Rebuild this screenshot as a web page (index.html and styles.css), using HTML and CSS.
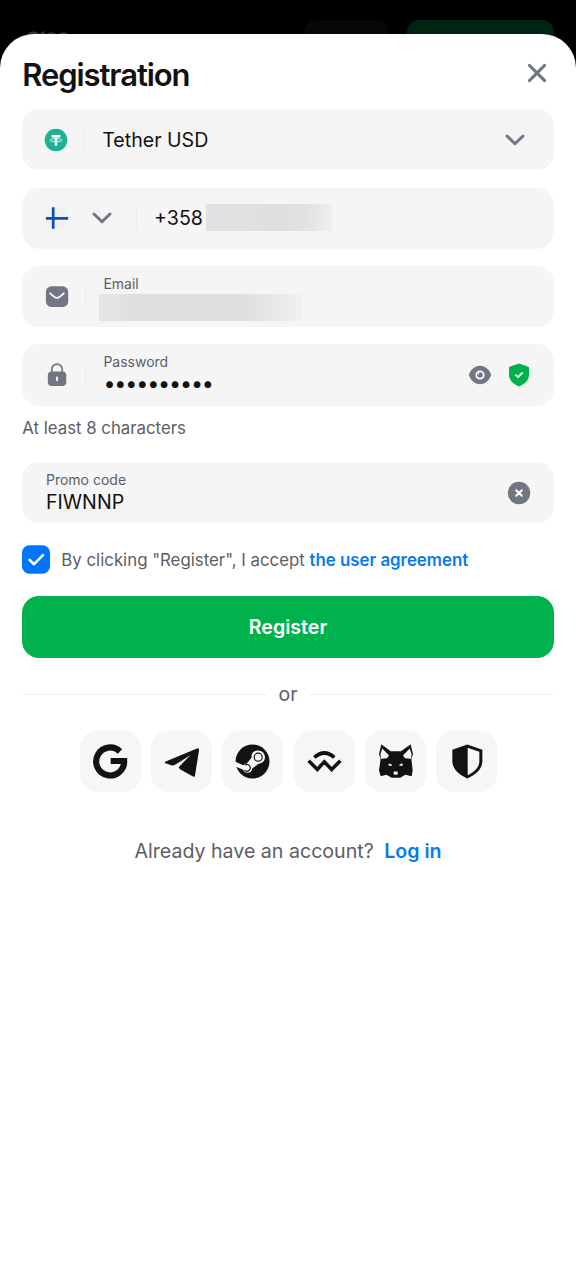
FILE: index.html
```html
<!DOCTYPE html>
<html lang="en">
<head>
<meta charset="utf-8">
<title>Registration</title>
<link rel="stylesheet" href="styles.css">
</head>
<body>
<header class="topbar">
  <svg class="topbar-logo" width="46" height="16" viewBox="0 0 46 16" fill="none" stroke="#343434" stroke-width="4"><path d="M2 9a6 6 0 0 1 11 0M16 4l3 6M30 9a5 5 0 0 0-9 0M33 9a5 5 0 0 1 9 0"/></svg>
  <span class="topbar-login"></span>
  <span class="topbar-register"></span>
</header>
<main class="sheet">
  <div class="heading">
    <h1 class="title">Registration</h1>
    <svg class="close" width="20" height="20" viewBox="0 0 20 20"><path class="line" d="M2.4 2.4 17.600 17.600M17.600 2.400 2.400 17.600"/></svg>
  </div>

  <div class="field currency">
    <svg width="24" height="24" viewBox="0 0 24 24"><circle cx="12" cy="12" r="11.3" fill="#1fb193"/><path d="M7.6 7h8.8v2.500h-3.100v8.200h-2.600V9.500H7.600z" fill="#fff"/><ellipse cx="12" cy="12.200" rx="6.200" ry="1.500" fill="none" stroke="#fff" stroke-width=".8"/></svg>
    <i class="divider"></i>
    <span class="value">Tether USD</span>
    <svg class="chevron" width="20" height="12" viewBox="0 0 20 12"><path class="line" d="M2 2l8 7.800L18 2"/></svg>
  </div>

  <div class="field phone">
    <svg width="24" height="24" viewBox="0 0 24 24"><circle cx="12" cy="12" r="11.200" fill="#f0f0f1"/><path d="M8.200 1.300v21.400M.9 12.300h22.200" stroke="#0c50ab" stroke-width="2.700"/></svg>
    <svg class="code-chevron" width="20" height="12" viewBox="0 0 20 12"><path class="line" d="M2 2l8 7.800L18 2"/></svg>
    <i class="divider"></i>
    <span class="value">+358</span>
    <span class="masked masked-phone"></span>
  </div>

  <div class="field email">
    <svg width="24" height="24" viewBox="0 0 24 24"><rect x=".9" y="1.300" width="22.300" height="20.600" rx="5.500" fill="#717684"/><path d="M5.200 8.400c2.600 2.500 4.800 4.500 6.800 4.500s4.200-2 6.800-4.500" fill="none" stroke="#fff" stroke-width="1.800" stroke-linecap="round"/></svg>
    <i class="divider"></i>
    <div class="stack">
      <span class="label">Email</span>
      <span class="masked masked-email"></span>
    </div>
  </div>

  <div class="field password">
    <svg width="24" height="24" viewBox="0 0 24 24"><path d="M6.800 11V6.300a5.200 5.200 0 0 1 10.400 0V11" fill="none" stroke="#717684" stroke-width="1.700"/><rect x="2.800" y="8.600" width="18.500" height="14.500" rx="4" fill="#717684"/><path d="M12 14.400v2.800" stroke="#fff" stroke-width="1.900" stroke-linecap="round"/></svg>
    <i class="divider"></i>
    <div class="stack">
      <span class="label">Password</span>
      <span class="dots">••••••••••</span>
    </div>
    <svg class="eye" width="24" height="24" viewBox="0 0 24 24"><path d="M.8 12C2.500 6.900 6.800 2.800 12 2.800S21.500 6.900 23.200 12C21.500 17.100 17.200 21.200 12 21.200S2.500 17.100.8 12z" fill="#717684"/><circle cx="12" cy="12" r="3.700" fill="none" stroke="#fff" stroke-width="1.800"/><circle cx="10.600" cy="10.600" r=".8" fill="#fff"/></svg>
    <svg class="safe" width="24" height="24" viewBox="0 0 24 24"><path d="M12 .6 20.700 3.400q1.300.4 1.300 1.700V12c0 5.500-4.600 9.200-10 11.400C6.600 21.200 2 17.500 2 12V5.100Q2 3.800 3.300 3.400z" fill="#00b24c"/><path d="m8.300 11.600 2.700 2.500 4.700-4.600" fill="none" stroke="#fff" stroke-width="1.800"/></svg>
  </div>
  <p class="hint">At least 8 characters</p>

  <div class="field promo">
    <div class="stack">
      <span class="label">Promo code</span>
      <span class="value">FIWNNP</span>
    </div>
    <svg class="clear" width="24" height="24" viewBox="0 0 24 24"><circle cx="12" cy="12" r="11.200" fill="#717684"/><path d="m9.200 9.200 5.600 5.600m0-5.600-5.600 5.600" stroke="#fff" stroke-width="2" stroke-linecap="round"/></svg>
  </div>

  <div class="agree">
    <svg width="28" height="29" viewBox="0 0 28 29"><rect y=".3" width="28" height="28.400" rx="7.500" fill="#0075ff"/><path d="m7.500 14.800 4.500 4.400 9-9" fill="none" stroke="#fff" stroke-width="2.600" stroke-linecap="round" stroke-linejoin="round"/></svg>
    <span class="agree-text">By clicking "Register", I accept <a class="link">the user agreement</a></span>
  </div>

  <button class="submit">Register</button>

  <div class="or"><span class="or-text">or</span></div>

  <div class="socials">
    <span class="social"><svg viewBox="15 25.500 183 183"><path d="M135 87A42 42 0 1 0 147.500 115.500H107" fill="none" stroke="#121212" stroke-width="18.500"/></svg></span>
    <span class="social"><svg viewBox="228 25.500 183 183"><path d="M272 117 366 78q7-2 6 6l-12 75q-1 6-6 3l-39-22q-6-4-1-9l32-33-46 29q-5 3-11 1l-18-6q-4-2 1-5z" fill="#121212"/></svg></span>
    <span class="social"><svg viewBox="19.500 25.500 183 183"><circle cx="111" cy="117" r="51" fill="#121212"/><path d="M58 117 83 128Q88 123 94 123L108 106Q107 84 128 84A20 20 0 0 1 129 124L110 138A14 14 0 0 1 83 142L58 131z" fill="#f6f6f6"/><circle cx="128" cy="104" r="12" fill="none" stroke="#121212" stroke-width="3.600"/><path d="M88 128A10 10 0 1 1 87 143" fill="none" stroke="#121212" stroke-width="3.400"/></svg></span>
    <span class="social"><svg viewBox="234 25.500 183 183" fill="none" stroke="#121212" stroke-width="10.800"><path d="M295 105q30-27 60 0M278 115 304 141 325 118 347 141 373 115"/></svg></span>
    <span class="social"><svg viewBox="15 25.500 183 183"><path d="M64 65 92 86h31l29-21 7 30-5 14 4 34-3 18-19-4-15 9H95l-16-9-17 4-5-18 5-34-5-14z" fill="#121212"/><path d="m67 78 20 21-6 8-18 2-2-14zM149 78l-20 21 6 8 18 2 2-14z" fill="#f6f6f6"/><path d="m85 125 4-2 7 4v3h-9zM129 125l-4-2-7 4v3h9zM102 147h10l2 6-3 4h-8l-3-4z" fill="#f6f6f6"/></svg></span>
    <span class="social"><svg viewBox="228 25.500 183 183"><path d="M322 66 367 82v34c0 25-21 40-45 52-24-12-45-27-45-52V82z" fill="#121212"/><path d="m323 76 35 12v28c0 20-16 32-35 42z" fill="#f6f6f6"/></svg></span>
  </div>

  <p class="login">Already have an account? <a class="link login-link">Log in</a></p>
</main>
</body>
</html>
```
FILE: styles.css
```css
* { box-sizing: border-box; }
body {
  margin: 0;
  height: 1280px;
  overflow: hidden;
  background: #000;
  color: #121212;
  font-family: Inter, "Liberation Sans", sans-serif;
}
svg { display: block; flex: none; }
.line {
  fill: none;
  stroke: #717684;
  stroke-width: 3;
  stroke-linecap: round;
  stroke-linejoin: round;
}
.topbar {
  display: flex;
  height: 33.5px;
  padding: 20px 22px 0 26px;
  overflow: visible;
}
.topbar-logo { margin: 7.500px auto 0 0; }
.topbar-login, .topbar-register { height: 44px; border-radius: 12px; }
.topbar-login { width: 85px; background: #070707; }
.topbar-register { width: 147px; margin-left: 18px; background: #002410; }
.sheet {
  position: relative;
  height: 1250px;
  padding: 0 22.300px;
  border-radius: 34px 34px 0 0;
  background: #fff;
}
.heading {
  display: flex;
  justify-content: space-between;
  height: 75.700px;
  padding: 22px 6.700px 0 0;
}
.title {
  margin: 0;
  font-size: 31px;
  line-height: 38px;
  font-weight: 600;
  letter-spacing: -1.100px;
}
.close { margin-top: 7px; }
.field {
  display: flex;
  align-items: center;
  height: 61.200px;
  margin-bottom: 17.200px;
  padding-left: 22.700px;
  border-radius: 17px;
  background: #f5f5f5;
}
.currency { padding: 0 28.700px 0 21.500px; }
.divider { width: 1.400px; height: 23px; margin-left: 16px; background: #ebebec; }
.value { font-size: 19.600px; line-height: 24px; }
.currency .value { margin-left: 17px; }
.chevron { margin-left: auto; }
.code-chevron { margin-left: 23px; }
.phone .divider { margin-left: 23.700px; }
.phone .value { margin-left: 17px; }
.masked { height: 26.500px; background: linear-gradient(90deg, #e6e6e6, #dedede 20%, #dfdfdf 70%, #f1f1f1); }
.masked-phone { width: 127px; margin: -1px 0 0 3.500px; background: linear-gradient(90deg, #e2e2e2, #dfdfdf 60%, #e2e2e2 80%, #f0f0f0); }
.masked-email { width: 203px; margin: 2px 0 0 -4px; }
.stack { display: flex; flex-direction: column; height: 61px; padding-top: 9px; margin-left: 17px; }
.label { font-size: 14px; line-height: 17px; color: #5b5e66; }
.dots { margin-top: 1px; font-size: 21.500px; line-height: 24px; letter-spacing: -1.150px; }
.email, .password { padding-right: 22.500px; }
.password { margin-bottom: 12px; }
.eye { margin-left: auto; }
.safe { margin-left: 15px; }
.hint { margin: 0 0 24px; font-size: 16.800px; line-height: 20.600px; color: #5b5e66; }
.promo { padding: 0 22.700px 0 23.700px; margin-bottom: 22px; }
.promo .stack { margin: 0; }
.promo .value { margin-top: 2px; }
.clear { margin-left: auto; }
.agree { display: flex; align-items: center; gap: 11px; height: 29px; margin-bottom: 22px; }
.agree-text { font-size: 16.830px; color: #5b5e66; white-space: nowrap; }
.link { color: #087bea; font-weight: 600; }
.submit {
  display: block;
  width: 100%;
  height: 61.500px;
  border: 0;
  border-radius: 17px;
  background: #00b24c;
  color: #fff;
  font: 600 19.600px/24px Inter, sans-serif;
}
.or { display: flex; align-items: center; gap: 11.500px; height: 73px; }
.or::before, .or::after { content: ""; flex: 1; height: 1.400px; background: #f0f0f1; }
.or-text { font-size: 19.500px; color: #5b5e66; }
.socials { display: flex; justify-content: center; gap: 10.300px; margin-left: 1px; }
.social { width: 61px; height: 61px; border-radius: 17px; background: #f6f6f6; }
.login { margin: 47px 0 0; text-align: center; font-size: 19.600px; line-height: 25px; color: #5b5e66; white-space: nowrap; }
.login-link { margin-left: 5px; }
```
